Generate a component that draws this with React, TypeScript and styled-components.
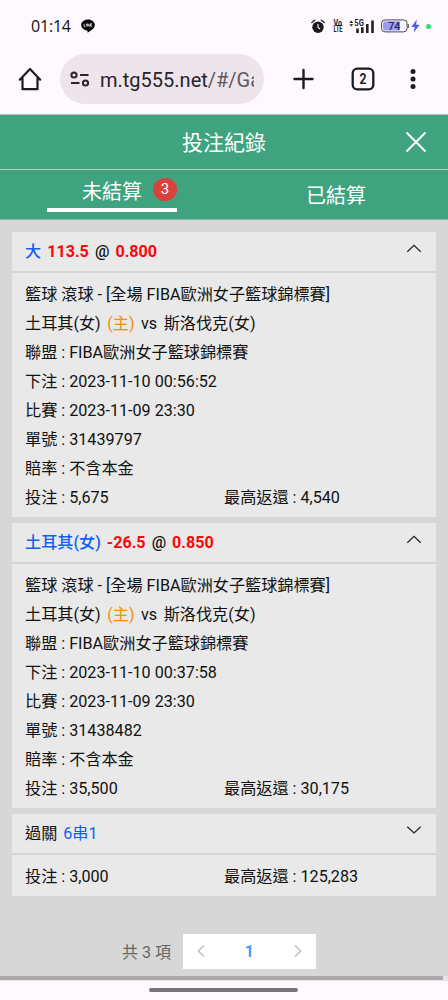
import React from "react";
import styled, { createGlobalStyle } from "styled-components";

const GlobalStyle = createGlobalStyle`
  * { box-sizing: border-box; }
  body {
    margin: 0;
    background: #fef9fe;
    font-family: Roboto, "Noto Sans CJK TC", sans-serif;
    color: #111;
  }
`;

const Screen = styled.div`
  width: 448px;
  height: 1000px;
  overflow: hidden;
  display: flex;
  flex-direction: column;
`;

const StatusBar = styled.div`
  height: 52px;
  flex: none;
  display: flex;
  align-items: center;
  padding: 0 17px 0 31px;
`;

const Clock = styled.span`
  width: 50px;
  font: 400 16px/20px "Open Sans", sans-serif;
  letter-spacing: -0.2px;
  color: #111;
`;

const StatusIcons = styled.div`
  margin-left: auto;
  display: flex;
  align-items: center;
`;

const Toolbar = styled.div`
  height: 63px;
  flex: none;
  display: flex;
  align-items: flex-start;
  padding: 2px 0 0 18px;
  border-bottom: 1px solid #c5bfc4;
`;

const AddressBar = styled.div`
  width: 204px;
  height: 50px;
  margin-left: 18px;
  padding-left: 10px;
  border-radius: 25px;
  background: #eee5ec;
  display: flex;
  align-items: center;
`;

const Url = styled.div`
  width: 154px;
  margin-left: 10px;
  padding-top: 2px;
  overflow: hidden;
  white-space: nowrap;
  font-size: 20px;
  line-height: 30px;
  color: #29232b;
`;

const UrlPath = styled.span`
  color: #5e585f;
`;

const ToolIcon = styled.div<{ $left: number }>`
  height: 50px;
  margin-left: ${(p) => p.$left}px;
  display: flex;
  align-items: center;
`;

const Header = styled.header`
  height: 55px;
  flex: none;
  display: grid;
  grid-template-columns: 64px 1fr 64px;
  align-items: center;
  background: #40a380;
  border-bottom: 1px solid #b5d3c7;
  color: #fff;
`;

const Title = styled.h1`
  grid-column: 2;
  margin: 0;
  padding-top: 2px;
  text-align: center;
  font-size: 21px;
  font-weight: 400;
  line-height: 30px;
`;

const CloseButton = styled.button`
  border: 0;
  padding: 0;
  background: none;
  display: flex;
  justify-content: center;
`;

const Tabs = styled.nav`
  height: 50px;
  flex: none;
  display: grid;
  grid-template-columns: 1fr 1fr;
  background: #40a380;
  border-bottom: 1px solid #82b8a3;
  color: #fff;
  font-size: 20px;
  line-height: 28px;
`;

const ActiveTab = styled.div`
  width: 130px;
  height: 42px;
  margin-left: 47px;
  padding: 8px 0 0 35px;
  border-bottom: 4px solid #fff;
  display: flex;
  align-items: flex-start;
`;

const Badge = styled.span`
  width: 24px;
  height: 23px;
  margin-left: 11px;
  border-radius: 50%;
  background: #d9413d;
  text-align: center;
  font-size: 15px;
  line-height: 23px;
`;

const Tab = styled.div`
  padding-top: 12px;
  text-align: center;
`;

const Content = styled.main`
  height: 756px;
  flex: none;
  padding: 12px 12px 0;
  display: flex;
  flex-direction: column;
  gap: 6px;
  background: #d7d7d7;
`;

const Card = styled.section`
  flex: none;
  background: #e9e9e9;
  font-size: 16.150px;
`;

const CardHead = styled.div`
  height: 41px;
  padding: 0 14px 0 13px;
  display: flex;
  align-items: flex-start;
  justify-content: space-between;
  border-bottom: 2px solid #d4d4d4;
  line-height: 40px;
`;

const Selection = styled.div`
  display: flex;
  gap: 6px;
`;

const Blue = styled.span<{ $medium?: boolean }>`
  color: #1261f0;
  font-weight: ${(p) => (p.$medium ? 500 : 400)};
`;

const Odds = styled.b`
  color: #fb0707;
  font-weight: 700;
`;

const At = styled.span`
  font-weight: 500;
`;

const CardBody = styled.div`
  padding: 7px 13px 5px;
`;

const Line = styled.div`
  height: 29px;
  line-height: 29px;
  white-space: pre;
`;

const AmountLine = styled(Line)`
  display: grid;
  grid-template-columns: 1fr 1fr;
`;

const Teams = styled(Line)`
  display: flex;
  gap: 6.500px;
`;

const Home = styled.span`
  color: #f98b0b;
`;

const Pager = styled.footer`
  margin-top: 32px;
  padding-left: 110px;
  display: flex;
  align-items: center;
  font-size: 16px;
  color: #666;
`;

const PagerTotal = styled.span`
  padding-bottom: 2px;
`;

const PagerBox = styled.div`
  width: 133px;
  height: 35px;
  margin-left: 12px;
  padding: 0 14px 1px;
  display: flex;
  align-items: center;
  justify-content: space-between;
  background: #fff;
`;

const PageNumber = styled.b`
  color: #409eff;
  font-size: 16px;
`;

const ScrollTrack = styled.div`
  height: 5px;
  flex: none;
  padding-right: 5px;
  background: #e5e1e5;
`;

const ScrollThumb = styled.div`
  height: 4px;
  background: #aaa8a9;
`;

const GestureBar = styled.div`
  width: 149px;
  height: 4px;
  flex: none;
  margin: 7px 0 0 149px;
  border-radius: 2px;
  background: #77737a;
`;

const LineLogo = () => (
  <svg width="14" height="14" viewBox="0 0 14 14">
    <path d="M7 .5C3.200.5.200 2.900.200 6c0 2.800 2.400 5 5.700 5.400.7.100.8.500.6 1.800 0 .3.200.4.500.2C9.300 12 13.800 9.500 13.800 6 13.800 2.900 10.800.5 7 .5Z" fill="#050505" />
    <path d="M3 4.700v2.700h1.300M5.400 4.700v2.700M6.600 7.400V4.700l1.600 2.700V4.700M11 4.700H9.600v2.700H11M9.600 6H11" fill="none" stroke="#eee" strokeWidth=".8" />
  </svg>
);

const AlarmIcon = () => (
  <svg width="14" height="15" viewBox="0 0 14 15">
    <circle cx="7" cy="8.300" r="5.700" fill="#18181a" />
    <path d="M.8 3.500 3.600 1.200M13.200 3.500 10.400 1.200" stroke="#18181a" strokeWidth="1.300" strokeLinecap="round" />
    <path d="M7 5.300v3.100l1.800 1.300" fill="none" stroke="#fff" strokeWidth="1.100" strokeLinecap="round" />
  </svg>
);

const VoLte = () => (
  <svg width="10" height="14" viewBox="0 0 10 14" style={{ marginLeft: 8 }} fontFamily="Roboto" fontWeight="700" fontSize="8.500" fill="#222">
    <text x=".5" y="6.500" textLength="8.500" lengthAdjust="spacingAndGlyphs">Vo</text>
    <text x=".5" y="13.300" textLength="9" lengthAdjust="spacingAndGlyphs">LTE</text>
  </svg>
);

const Signal = () => (
  <svg width="26" height="15" viewBox="0 0 26 15" style={{ marginLeft: 6 }}>
    <path d="M.3 4 2.300 1.500 4.300 4ZM.3 5.200h4L2.300 7.600Z" fill="#222" />
    <text x="5.300" y="7" fontFamily="Roboto" fontSize="8.500" fontWeight="700" fill="#222" textLength="9.500" lengthAdjust="spacingAndGlyphs">5G</text>
    <path d="M8.500 9.500v4.500M13.300 8.300V14M18.300 5V14M23.500 1.500V14" stroke="#222" strokeWidth="2.600" />
  </svg>
);

const Battery = () => (
  <svg width="28" height="14" viewBox="0 0 28 14" style={{ marginLeft: 6 }}>
    <rect x=".6" y=".9" width="25.500" height="12" rx="3.500" fill="#f8f6ff" stroke="#4a4953" />
    <path d="M4.500 2.300H19v9.300H4.500A2.500 2.500 0 0 1 2 9.200V4.700A2.500 2.500 0 0 1 4.500 2.300Z" fill="#9a9df6" />
    <path d="M27.300 5v4" stroke="#4a4953" />
    <text x="13.200" y="10.600" textAnchor="middle" fontFamily="Roboto" fontSize="10.500" fontWeight="500" fill="#26264d">74</text>
  </svg>
);

const Bolt = () => (
  <svg width="9" height="14" viewBox="0 0 9 14" style={{ marginLeft: 2.5 }}>
    <path d="M5.800.5.4 8h3.300l-.9 5.500L8.600 5.700H5.100Z" fill="#4a5cec" />
  </svg>
);

const ActivityDot = styled.span`
  width: 5px;
  height: 5px;
  margin-left: 6px;
  border-radius: 50%;
  background: #30d879;
`;

const HomeIcon = () => (
  <svg width="24" height="24" viewBox="0 0 24 24" fill="none" stroke="#1d1a1f" strokeWidth="2.200" strokeLinejoin="round" strokeLinecap="round">
    <path d="M1.800 12.700 12 2l10.200 10.700M4.500 11v11.200h15V11" />
  </svg>
);

const TuneIcon = () => (
  <svg width="20" height="18" viewBox="0 0 20 18" fill="none" stroke="#29232b" strokeWidth="2">
    <circle cx="4" cy="5" r="2.600" />
    <path d="M10 5h8.500M1 13h8.500" />
    <circle cx="15.500" cy="13" r="2.600" />
  </svg>
);

const Chevron = ({ down }: { down?: boolean }) => (
  <svg width="16" height="32" viewBox="0 0 16 32" fill="none" stroke="#222" strokeWidth="1.200">
    <path d={down ? "M1.300 12.700 8 19l6.700-6.300" : "M1.300 19.800 8 13.300l6.700 6.500"} />
  </svg>
);

const PageArrow = ({ next }: { next?: boolean }) => (
  <svg width="8" height="14" viewBox="0 0 8 14" fill="none" stroke="#b9bcc2" strokeWidth="1.400">
    <path d={next ? "m1 1.500 5.700 5.500L1 12.500" : "M7 1.500 1.300 7 7 12.500"} />
  </svg>
);

type Bet = {
  pick: string;
  line: string;
  odds: string;
  placed: string;
  ticket: string;
  stake: string;
  payout: string;
};

const bets: Bet[] = [
  { pick: "大", line: "113.5", odds: "0.800", placed: "2023-11-10 00:56:52", ticket: "31439797", stake: "5,675", payout: "4,540" },
  { pick: "土耳其(女)", line: "-26.5", odds: "0.850", placed: "2023-11-10 00:37:58", ticket: "31438482", stake: "35,500", payout: "30,175" },
];

const Amounts = ({ stake, payout }: { stake: string; payout: string }) => (
  <AmountLine>
    <span>投注 : {stake}</span>
    <span>最高返還 : {payout}</span>
  </AmountLine>
);

const BetCard = ({ bet }: { bet: Bet }) => (
  <Card>
    <CardHead>
      <Selection>
        <Blue $medium>{bet.pick}</Blue>
        <Odds>{bet.line}</Odds>
        <At>@</At>
        <Odds>{bet.odds}</Odds>
      </Selection>
      <Chevron />
    </CardHead>
    <CardBody>
      <Line>籃球 滾球 - [全場 FIBA歐洲女子籃球錦標賽]</Line>
      <Teams>
        <span>土耳其(女)</span>
        <Home>(主)</Home>
        <span>vs</span>
        <span>斯洛伐克(女)</span>
      </Teams>
      <Line>聯盟 : FIBA歐洲女子籃球錦標賽</Line>
      <Line>下注 : {bet.placed}</Line>
      <Line>比賽 : 2023-11-09 23:30</Line>
      <Line>單號 : {bet.ticket}</Line>
      <Line>賠率 : 不含本金</Line>
      <Amounts stake={bet.stake} payout={bet.payout} />
    </CardBody>
  </Card>
);

export default function App() {
  return (
    <Screen>
      <GlobalStyle />
      <StatusBar>
        <Clock>01:14</Clock>
        <LineLogo />
        <StatusIcons>
          <AlarmIcon />
          <VoLte />
          <Signal />
          <Battery />
          <Bolt />
          <ActivityDot />
        </StatusIcons>
      </StatusBar>
      <Toolbar>
        <ToolIcon $left={0}><HomeIcon /></ToolIcon>
        <AddressBar>
          <TuneIcon />
          <Url>m.tg555.net<UrlPath>/#/Ga</UrlPath></Url>
        </AddressBar>
        <ToolIcon $left={29}>
          <svg width="22" height="22" viewBox="0 0 22 22" stroke="#1d1a1f" strokeWidth="2.400" strokeLinecap="round">
            <path d="M10.500 2v18M1.500 11h18" />
          </svg>
        </ToolIcon>
        <ToolIcon $left={36}>
          <svg width="24" height="24" viewBox="0 0 24 24">
            <rect x="1.700" y="1.700" width="20.600" height="20.600" rx="4.500" fill="none" stroke="#1d1a1f" strokeWidth="2.300" />
            <text x="8.600" y="17.300" fontFamily="Roboto" fontSize="15" fontWeight="700" fill="#1d1a1f" textLength="7" lengthAdjust="spacingAndGlyphs">2</text>
          </svg>
        </ToolIcon>
        <ToolIcon $left={35}>
          <svg width="6" height="22" viewBox="0 0 6 22" fill="#1d1a1f">
            <circle cx="3" cy="3.500" r="2.500" />
            <circle cx="3" cy="11" r="2.500" />
            <circle cx="3" cy="18.500" r="2.500" />
          </svg>
        </ToolIcon>
      </Toolbar>
      <Header>
        <Title>投注紀錄</Title>
        <CloseButton aria-label="關閉">
          <svg width="22" height="22" viewBox="0 0 22 22" stroke="#fff" strokeWidth="2" strokeLinecap="round">
            <path d="m2 2 18 18M20 2 2 20" />
          </svg>
        </CloseButton>
      </Header>
      <Tabs>
        <ActiveTab>
          未結算
          <Badge>3</Badge>
        </ActiveTab>
        <Tab>已結算</Tab>
      </Tabs>
      <Content>
        {bets.map((bet) => <BetCard key={bet.ticket} bet={bet} />)}
        <Card>
          <CardHead>
            <Selection>
              <span>過關</span>
              <Blue>6串1</Blue>
            </Selection>
            <Chevron down />
          </CardHead>
          <CardBody>
            <Amounts stake="3,000" payout="125,283" />
          </CardBody>
        </Card>
        <Pager>
          <PagerTotal>共 3 項</PagerTotal>
          <PagerBox>
            <PageArrow />
            <PageNumber>1</PageNumber>
            <PageArrow next />
          </PagerBox>
        </Pager>
      </Content>
      <ScrollTrack><ScrollThumb /></ScrollTrack>
      <GestureBar />
    </Screen>
  );
}
